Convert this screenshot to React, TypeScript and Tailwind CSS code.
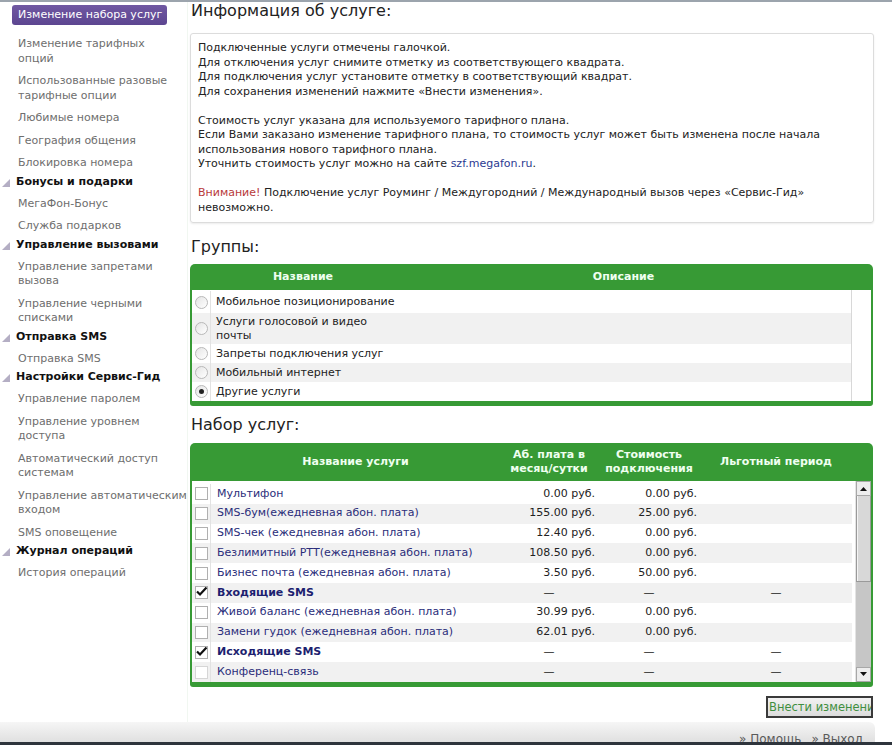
import React from "react";

type SideEntry = { kind: "active" | "item" | "head"; lines: string[] };

const sidebar: SideEntry[] = [
  { kind: "active", lines: ["Изменение набора услуг"] },
  { kind: "item", lines: ["Изменение тарифных", "опций"] },
  { kind: "item", lines: ["Использованные разовые", "тарифные опции"] },
  { kind: "item", lines: ["Любимые номера"] },
  { kind: "item", lines: ["География общения"] },
  { kind: "item", lines: ["Блокировка номера"] },
  { kind: "head", lines: ["Бонусы и подарки"] },
  { kind: "item", lines: ["МегаФон-Бонус"] },
  { kind: "item", lines: ["Служба подарков"] },
  { kind: "head", lines: ["Управление вызовами"] },
  { kind: "item", lines: ["Управление запретами", "вызова"] },
  { kind: "item", lines: ["Управление черными", "списками"] },
  { kind: "head", lines: ["Отправка SMS"] },
  { kind: "item", lines: ["Отправка SMS"] },
  { kind: "head", lines: ["Настройки Сервис-Гид"] },
  { kind: "item", lines: ["Управление паролем"] },
  { kind: "item", lines: ["Управление уровнем", "доступа"] },
  { kind: "item", lines: ["Автоматический доступ", "системам"] },
  { kind: "item", lines: ["Управление автоматическим", "входом"] },
  { kind: "item", lines: ["SMS оповещение"] },
  { kind: "head", lines: ["Журнал операций"] },
  { kind: "item", lines: ["История операций"] },
];

const groups = [
  { lines: ["Мобильное позиционирование"], h: "h-[22px]" },
  { lines: ["Услуги голосовой и видео", "почты"], h: "h-[31px]" },
  { lines: ["Запреты подключения услуг"], h: "h-[19px]" },
  { lines: ["Мобильный интернет"], h: "h-[19px]" },
  { lines: ["Другие услуги"], h: "h-[19px]", selected: true },
];

type Service = { name: string; ab?: string; st?: string; bold?: boolean; checked?: boolean; dim?: boolean };

const services: Service[] = [
  { name: "Мультифон", ab: "0.00 руб.", st: "0.00 руб." },
  { name: "SMS-бум(ежедневная абон. плата)", ab: "155.00 руб.", st: "25.00 руб." },
  { name: "SMS-чек (ежедневная абон. плата)", ab: "12.40 руб.", st: "0.00 руб." },
  { name: "Безлимитный РТТ(ежедневная абон. плата)", ab: "108.50 руб.", st: "0.00 руб." },
  { name: "Бизнес почта (ежедневная абон. плата)", ab: "3.50 руб.", st: "50.00 руб." },
  { name: "Входящие SMS", bold: true, checked: true },
  { name: "Живой баланс (ежедневная абон. плата)", ab: "30.99 руб.", st: "0.00 руб." },
  { name: "Замени гудок (ежедневная абон. плата)", ab: "62.01 руб.", st: "0.00 руб." },
  { name: "Исходящие SMS", bold: true, checked: true },
  { name: "Конференц-связь", dim: true },
];

function Triangle() {
  return (
    <svg width="8" height="8" viewBox="0 0 8 8" className="shrink-0">
      <polygon points="8,0 8,8 0,8" fill="#b4aec4" />
    </svg>
  );
}

function Radio({ on }: { on?: boolean }) {
  return (
    <span className="w-[13px] h-[13px] rounded-full border border-[#b8b8b8] bg-gradient-to-br from-[#e4e4e4] to-white flex items-center justify-center">
      {on && <span className="w-[5px] h-[5px] rounded-full bg-[#222]" />}
    </span>
  );
}

function Check({ on, dim }: { on?: boolean; dim?: boolean }) {
  return (
    <span
      className={`relative w-[13px] h-[13px] border bg-white ${dim ? "border-[#d6d6d6]" : "border-[#b0b0b0]"}`}
    >
      {on && (
        <svg width="13" height="13" viewBox="0 0 13 13" className="absolute left-[-1px] top-[-2px]">
          <path d="M2 6.5 L5 9.5 L11.5 2.5" fill="none" stroke="#111" strokeWidth="2.2" />
        </svg>
      )}
    </span>
  );
}

export default function App() {
  return (
    <div className="w-[892px] h-[745px] overflow-hidden bg-white border-t-2 border-[#9ca4ad] flex flex-col font-['DejaVu_Sans',sans-serif] text-[11px]">
      <div className="flex flex-1 min-h-0">
        {/* Sidebar */}
        <aside className="w-[188px] shrink-0 border-r border-[#f1f7f1] pt-[3px]">
          {sidebar.map((e, i) => {
            if (e.kind === "active")
              return (
                <div
                  key={i}
                  className="ml-[12px] w-[155px] h-[20px] rounded-[3px] bg-gradient-to-b from-[#7058a2] to-[#5c4590] text-white leading-[20px] pl-[6px] mb-[8px] whitespace-nowrap"
                >
                  {e.lines[0]}
                </div>
              );
            if (e.kind === "head")
              return (
                <div key={i} className="flex items-end gap-[6px] pl-[2px] leading-[14px] pb-[4px] font-bold text-[#111] whitespace-nowrap">
                  <span className="pb-[2px]">
                    <Triangle />
                  </span>
                  {e.lines[0]}
                </div>
              );
            return (
              <div key={i} className="pl-[18px] py-[4px] leading-[14.5px] text-[#6e6e6e] whitespace-nowrap">
                {e.lines.map((l, j) => (
                  <div key={j}>{l}</div>
                ))}
              </div>
            );
          })}
        </aside>

        {/* Main */}
        <main className="w-[684px] ml-[2px] flex flex-col text-[#222]">
          <h1 className="text-[16px] leading-[18px] pl-[1px]">Информация об услуге:</h1>
          <div className="mt-[13px] border border-[#dcdcdc] rounded-[3px] shadow-[0_1px_2px_rgba(0,0,0,0.08)] px-[7px] pt-[7px] pb-[7px] leading-[14.5px] whitespace-nowrap">
            <div>Подключенные услуги отмечены галочкой.</div>
            <div>Для отключения услуг снимите отметку из соответствующего квадрата.</div>
            <div>Для подключения услуг установите отметку в соответствующий квадрат.</div>
            <div>Для сохранения изменений нажмите «Внести изменения».</div>
            <div className="h-[14.5px]" />
            <div>Стоимость услуг указана для используемого тарифного плана.</div>
            <div>Если Вами заказано изменение тарифного плана, то стоимость услуг может быть изменена после начала</div>
            <div>использования нового тарифного плана.</div>
            <div>
              Уточнить стоимость услуг можно на сайте <span className="text-[#2b3a92]">szf.megafon.ru</span>.
            </div>
            <div className="h-[14.5px]" />
            <div>
              <span className="text-[#b8393a]">Внимание!</span> Подключение услуг Роуминг / Междугородний / Международный вызов через «Сервис-Гид»
            </div>
            <div>невозможно.</div>
          </div>

          <h2 className="mt-[15px] text-[16px] leading-[18px] pl-[1px]">Группы:</h2>
          <div className="mt-[8px] w-[683px]">
            <div className="flex h-[26px] bg-[#379a35] rounded-t-[5px] items-center font-bold text-[#effff0]">
              <div className="w-[21px]" />
              <div className="w-[184px] text-center">Название</div>
              <div className="w-[457px] text-center">Описание</div>
            </div>
            <div className="flex border-l-2 border-r-2 border-b-[5px] border-[#379a35] rounded-b-[3px]">
              <div className="w-[660px] border-r border-[#d8d8d8] pt-[1px]">
                {groups.map((g, i) => (
                  <div key={i} className={`flex ${g.h} ${i % 2 ? "bg-[#f1f1f1]" : "bg-white"}`}>
                    <div className="w-[19px] border-r border-[#e2e2e2] flex items-center justify-center">
                      <Radio on={g.selected} />
                    </div>
                    <div className="w-[184px] pl-[5px] leading-[13.5px] whitespace-nowrap flex flex-col justify-center">
                      {g.lines.map((l, j) => (
                        <div key={j}>{l}</div>
                      ))}
                    </div>
                    <div className="flex-1" />
                  </div>
                ))}
              </div>
              <div className="flex-1 bg-white" />
            </div>
          </div>

          <h2 className="mt-[10px] text-[16px] leading-[18px] pl-[1px]">Набор услуг:</h2>
          <div className="mt-[9px] w-[683px]">
            <div className="flex h-[38px] bg-[#379a35] rounded-t-[5px] items-center font-bold text-[#effff0] leading-[14px]">
              <div className="w-[21px]" />
              <div className="w-[289px] text-center">Название услуги</div>
              <div className="w-[98px] text-center">
                Аб. плата в<br />месяц/сутки
              </div>
              <div className="w-[102px] text-center">
                Стоимость<br />подключения
              </div>
              <div className="w-[152px] text-center">Льготный период</div>
            </div>
            <div className="flex border-l-2 border-r-2 border-b-[5px] border-[#379a35] rounded-b-[3px] bg-white">
              <div className="w-[660px] pt-[3px]">
                {services.map((s, i) => (
                  <div key={i} className={`flex h-[19.8px] items-center ${i % 2 ? "bg-[#f1f1f1]" : "bg-white"}`}>
                    <div className="w-[19px] h-full border-r border-[#e2e2e2] flex items-center justify-center">
                      <Check on={s.checked} dim={s.dim} />
                    </div>
                    <div
                      className={`w-[289px] pl-[6px] whitespace-nowrap ${s.bold ? "font-bold text-[#1d1f70]" : "text-[#2a2d7a]"}`}
                    >
                      {s.name}
                    </div>
                    <div className={`w-[98px] whitespace-nowrap ${s.ab ? "text-right pr-[3px]" : "text-center"}`}>
                      {s.ab ?? "—"}
                    </div>
                    <div className={`w-[102px] whitespace-nowrap ${s.st ? "text-right pr-[3px]" : "text-center"}`}>
                      {s.st ?? "—"}
                    </div>
                    <div className="w-[152px] text-center">{s.ab ? "" : "—"}</div>
                  </div>
                ))}
              </div>
              {/* scrollbar */}
              <div className="ml-[3px] w-[16px] flex flex-col border-l border-[#e4e4e4]">
                <div className="h-[15px] bg-[#ededed] border border-[#a8a8a8] flex items-center justify-center">
                  <svg width="7" height="4" viewBox="0 0 7 4">
                    <polygon points="0,4 7,4 3.5,0" fill="#111" />
                  </svg>
                </div>
                <div className="h-[86px] bg-[#d8d8d8] border-x border-b border-[#9a9a9a] shadow-[inset_1px_0_0_#f4f4f4]" />
                <div className="flex-1 bg-[#c6c6c6]" />
                <div className="h-[15px] bg-[#ededed] border border-[#a8a8a8] flex items-center justify-center">
                  <svg width="7" height="4" viewBox="0 0 7 4">
                    <polygon points="0,0 7,0 3.5,4" fill="#111" />
                  </svg>
                </div>
              </div>
            </div>
          </div>

          <div className="mt-[9px] flex justify-end w-[683px]">
            <button className="w-[107px] h-[22px] border-2 border-[#3a3a3a] bg-gradient-to-b from-[#f2f2f2] to-[#dcdcdc] text-[#3f8f3f] text-[11.5px] leading-[18px] text-left pl-[1px] overflow-hidden whitespace-nowrap">
              Внести изменения
            </button>
          </div>
        </main>
      </div>

      {/* Footer */}
      <div className="h-[20px] w-[875px] shrink-0 rounded-tr-[6px] bg-gradient-to-b from-[#f6f6f6] to-[#e0e0e0] flex items-end justify-end pr-[12px] gap-[10px] overflow-hidden text-[12px] text-[#5a5a5a] leading-[14px]">
        <span className="mb-[-4px]">
          » <span className="underline">Помощь</span>
        </span>
        <span className="mb-[-4px]">
          » <span className="underline">Выход</span>
        </span>
      </div>
      <div className="h-[3px] shrink-0 bg-[#2e343c]" />
    </div>
  );
}
